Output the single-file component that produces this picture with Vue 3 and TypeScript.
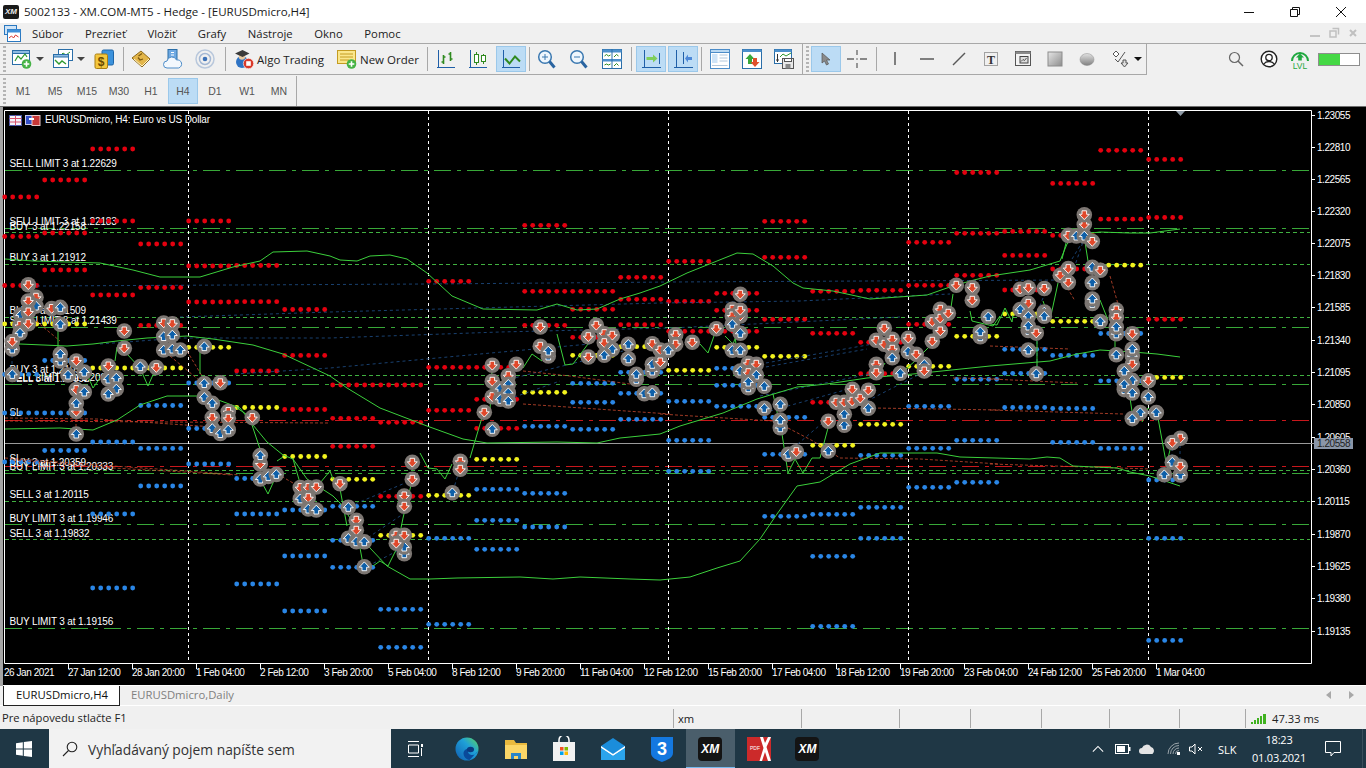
<script setup lang="ts">
type Row = [number, number, number?]
type Pt = [number, number]

const menus = ['Súbor', 'Prezrieť', 'Vložiť', 'Grafy', 'Nástroje', 'Okno', 'Pomoc']
const frames = ['M1', 'M5', 'M15', 'M30', 'H1', 'H4', 'D1', 'W1', 'MN']

const red: Row[] = [
  [92.7,148],[44.7,179],[4.7,196,5],[92.7,220],[188.7,220],[4.7,235.5,5],[44.7,232],[140.7,243],
  [188.7,265],[236.7,264.5],[44.7,269],[4.7,284.5,5],[140.7,286.5],[92.7,294],[188.7,301],[236.7,300.7],
  [284.7,308.5],[140.7,324.4],[284.7,354.4],[236.7,370],[332.7,384,12],[284.7,408.5],[332.7,417.3],[380.7,421.3],
  [332.7,445.3],[524.7,224.3],[428.7,280.3],[524.7,290.3,12],[620.7,276.3],[620.7,298.3],[572.7,308.3],
  [620.7,323.7],[524.7,324.3],[572.7,336.3],[428.7,366.3,12],[428.7,409.3],[476.7,398.3],[476.7,427.3],
  [380.7,495.3],[668.7,260.3],[764.7,220.3],[764.7,256.3],[812.7,290.3],[860.7,289.3],[908.7,241.3],[908.7,284.3],
  [956.7,232.3],[956.7,274.3],[668.7,300.3],[716.7,292.3],[716.7,309.3],[764.7,318.3],[668.7,330.3],[716.7,330.3],
  [812.7,332.3],[860.7,341.3],[908.7,323.3],[860.7,372.7],[812.7,401.3],[1100.7,149.3],[1148.7,158.4,5],
  [1052.7,182.4],[1100.7,218.2],[1148.7,216.5,5],[1004.7,230.4],[1052.7,234.4],[1004.7,254.4],[1052.7,268],
  [1004.7,289],[1148.7,318.3,5],[956.7,171.5,6]
]
const yellow: Row[] = [
  [4.7,323,11],[92.7,367,12],[188.7,346.3],[236.7,406.5],[284.7,455.5],[332.7,478.3],[428.7,494.3],[476.7,458.3],
  [380.7,534.3],[524.7,391.3],[572.7,354.3],[620.7,345.7],[668.7,369.3],[716.7,346.3],[764.7,355.3],[812.7,444.3],
  [860.7,423.3],[908.7,365.3],[956.7,335.3],[1052.7,320.3],[1004.7,313],[1100.7,264.2],[1148.7,376.4,5]
]
const blue: Row[] = [
  [44.7,359.5],[4.7,373.4,5],[188.7,382],[140.7,404.5],[4.7,412,11],[188.7,427.5],[92.7,441],[44.7,449.5],[140.7,447.4],
  [4.7,461,5],[188.7,463],[236.7,477.5],[140.7,485],[284.7,509],[332.7,505.3],[92.7,513],[236.7,513],[332.7,539.3],
  [284.7,555],[332.7,566.3],[236.7,583],[92.7,587],[284.7,610],[428.7,537.3],[476.7,488.3],[476.7,519.3],[476.7,548.3],
  [524.7,492.3],[524.7,526],[524.7,425.3],[572.7,382.3],[572.7,401.3],[572.7,428.3],[620.7,371.3],[620.7,392.3],
  [620.7,418.3],[380.7,608.3],[380.7,646.3],[428.7,623.3],[668.7,400.3],[668.7,439.3],[668.7,470.3],[716.7,367.3],
  [716.7,384.3],[716.7,405.3],[764.7,416.3],[764.7,453.3],[764.7,515.3],[812.7,513.3],[812.7,555.3],[812.7,625.3],
  [860.7,454.3],[860.7,506.3],[860.7,537.3],[908.7,405.3],[908.7,447.3],[908.7,486.3],[956.7,378.3],[956.7,439.3],
  [956.7,481.3],[1100.7,332.5],[1004.7,348.3],[1052.7,354.4],[1004.7,372.3],[1100.7,379.8],[1004.7,406.5],[1052.7,407.5],
  [1052.7,441.3],[1100.7,447.4],[1148.7,479,5],[1148.7,537.3,5],[1148.7,639.4,5]
]
const dots = (rows: Row[]) =>
  rows.flatMap(([x, y, n]) => Array.from({ length: n ?? 6 }, (_, i) => [x + i * 8, y] as Pt))
const dotGroups = [
  { c: '#e4000f', pts: dots(red) },
  { c: '#f2f21e', pts: dots(yellow) },
  { c: '#2a86e6', pts: dots(blue) }
]

const hLines = [
  { y: 169.5, k: 'long' }, { y: 227.5, k: 'long' }, { y: 231.5, k: 'short' }, { y: 263.5, k: 'short' },
  { y: 316.5, k: 'short' }, { y: 326.5, k: 'long' }, { y: 374.5, k: 'short' }, { y: 383.5, k: 'long' },
  { y: 469.5, k: 'short' }, { y: 472.5, k: 'long' }, { y: 500.5, k: 'short' }, { y: 523.5, k: 'long' },
  { y: 538.5, k: 'short' }, { y: 627.5, k: 'long' }, { y: 419.5, k: 'red' }, { y: 465.5, k: 'red' }
]
const separators = [188.5, 428.5, 668.5, 908.5, 1148.5]

const labels: [string, number][] = [
  ['SELL LIMIT 3 at 1.22629', 165.5], ['SELL LIMIT 3 at 1.22183', 223.5], ['BUY 3 at 1.22158', 228.5],
  ['BUY 3 at 1.21912', 259.5], ['BUY 3 at 1.21509', 312.5], ['SELL LIMIT 3 at 1.21439', 322.5],
  ['BUY 3 at 1.21052', 371.5], ['SELL LIMIT 3 at 1.20994', 379.5], ['SELL 3 at 1.20992', 381],
  ['SL', 414.5], ['SL', 461], ['BUY 3 at 1.20359', 465], ['BUY LIMIT 3 at 1.20333', 468.5],
  ['SELL 3 at 1.20115', 496.5], ['BUY LIMIT 3 at 1.19946', 520.5], ['SELL 3 at 1.19832', 535.5],
  ['BUY LIMIT 3 at 1.19156', 623.5]
]
const priceAxis: [string, number][] = [
  ['1.23055', 114], ['1.22810', 146], ['1.22565', 178], ['1.22320', 210], ['1.22075', 242], ['1.21830', 274],
  ['1.21585', 306], ['1.21340', 339], ['1.21095', 371], ['1.20850', 403], ['1.20605', 436], ['1.20360', 468],
  ['1.20115', 500], ['1.19870', 533], ['1.19625', 565], ['1.19380', 597], ['1.19135', 630]
]
const timeAxis = ['26 Jan 2021', '27 Jan 12:00', '28 Jan 20:00', '1 Feb 04:00', '2 Feb 12:00', '3 Feb 20:00', '5 Feb 04:00',
  '8 Feb 12:00', '9 Feb 20:00', '11 Feb 04:00', '12 Feb 12:00', '15 Feb 20:00', '17 Feb 04:00', '18 Feb 12:00',
  '19 Feb 20:00', '23 Feb 04:00', '24 Feb 12:00', '25 Feb 20:00', '1 Mar 04:00']

const toPts = (a: Pt[]) => a.map(p => p.join(',')).join(' ')

const bands: Pt[][] = [
  [[5,258],[33,260],[100,262],[133,269],[160,276],[200,276],[233,266],[260,260],[273,251],[307,250],[330,255],[340,259],[357,260],[370,255],[390,254],[407,258],[427,272],[452,295],[483,308],[537,309],[557,303],[577,309],[597,308],[620,298],[640,292],[660,285],[687,272],[717,260],[737,252],[753,253],[773,265],[793,282],[803,287],[833,290],[870,298],[927,294],[947,287],[970,280],[990,275],[1030,269],[1060,260],[1067,243],[1076,234],[1100,231],[1130,232],[1150,232],[1180,228]],
  [[5,346],[20,343],[67,345],[93,343],[117,340],[147,337],[187,335],[213,338],[253,344],[283,353],[313,367],[330,375],[347,387],[380,407],[427,425],[463,438],[487,442],[557,441],[597,442],[620,437],[650,434],[660,433],[680,425],[723,412],[757,398],[797,386],[827,383],[867,377],[913,373],[990,365],[1050,360],[1077,353],[1100,349],[1133,351],[1157,353],[1180,356]],
  [[5,428],[60,427],[93,429],[117,419],[140,404],[167,395],[197,395],[213,397],[240,407],[253,424],[267,441],[283,454],[293,458],[307,478],[333,495],[340,502],[370,547],[387,565],[410,578],[430,578],[457,577],[520,576],[553,578],[580,576],[630,578],[660,579],[690,576],[717,567],[740,560],[760,538],[777,513],[797,485],[820,481],[850,463],[880,452],[937,452],[960,456],[1030,458],[1047,456],[1060,457],[1073,465],[1117,467],[1130,471],[1150,475],[1180,485]]
]
const price: Pt[][] = [
  [[58,329],[58,346]], [[117,346],[115,360]], [[127,353],[140,367],[148,385],[156,367]], [[87,373],[93,387],[100,377]],
  [[200,346],[200,373]], [[237,407],[252,417]], [[252,424],[260,448]], [[260,478],[268,493],[277,473]], [[277,460],[283,456]],
  [[293,458],[300,482]], [[320,482],[330,470],[333,478]], [[340,488],[347,525]], [[360,547],[363,563]],
  [[373,565],[380,560],[388,565],[397,547],[403,517],[412,480]], [[420,452],[428,467],[437,468],[445,478],[452,463]],
  [[470,457],[483,413]], [[490,410],[492,368]], [[523,367],[532,353],[542,360]], [[557,333],[565,364],[573,363],[588,343]],
  [[700,343],[708,352],[715,332]], [[725,335],[733,343],[738,330]], [[737,355],[735,333]], [[773,393],[782,433],[788,472],[795,458],[803,472],[812,457],[820,457],[828,427]],
  [[840,413],[848,390]], [[875,378],[885,362]], [[898,375],[915,360],[930,345],[936,322]], [[953,293],[950,313]], [[970,310],[972,320],[993,325],[1000,315]],
  [[990,323],[997,324],[1005,307],[1012,321],[1013,314]], [[1037,340],[1037,370]], [[1043,300],[1050,319]], [[1058,282],[1050,319]],
  [[1062,258],[1066,242]], [[1085,241],[1088,260]], [[1100,299],[1108,319]], [[1115,336],[1115,346]], [[1130,397],[1133,417]],
  [[1142,421],[1148,407],[1158,417],[1166,461]], [[1172,441],[1166,465]]
]
const blueDash: Pt[][] = [
  [[37,285],[430,283],[670,281],[1067,279]], [[180,316],[330,311],[660,302],[800,300],[950,293]],
  [[100,343],[180,337],[330,337],[500,331],[670,327],[900,316]], [[235,373],[330,367],[480,353],[590,343]],
  [[510,378],[623,350]], [[760,367],[867,348]], [[760,363],[873,343]], [[760,395],[875,372]], [[770,410],[870,382]],
  [[793,447],[833,413]], [[867,400],[920,373]], [[350,505],[410,480]], [[363,540],[403,513]], [[368,565],[403,547]],
  [[453,490],[460,467]], [[503,400],[560,380]], [[1037,367],[1037,332]], [[1043,297],[1030,329]], [[1070,279],[1085,235]],
  [[1072,258],[1083,240]], [[1180,444],[1180,471]], [[1172,441],[1172,461]], [[12,348],[12,373]], [[20,332],[28,300]]
]
const redDash: Pt[][] = [
  [[5,417],[97,418],[200,425],[230,427]], [[5,420],[330,422]], [[5,457],[113,465],[187,470],[240,474]],
  [[13,459],[113,467],[200,472],[233,474]], [[523,370],[570,375],[630,383]], [[523,403],[670,413]], [[660,413],[773,420]],
  [[788,427],[813,440],[840,457],[920,458],[1000,463]], [[873,407],[1000,409]], [[953,377],[1000,378]],
  [[990,345],[1070,348]], [[990,378],[1077,382]], [[990,409],[1123,413]], [[990,463],[1150,468]],
  [[170,355],[200,380]], [[187,350],[205,380]], [[36,320],[60,340]], [[76,388],[76,433]], [[212,405],[212,428]],
  [[1060,274],[1075,300]], [[1110,275],[1120,310]], [[1132,335],[1132,392]], [[260,463],[300,486]]
]

const markers: [number, number, 'u' | 'd'][] = [
  [28.3,283.8,'d'],[36,296.3,'d'],[36,305,'u'],[28.3,300,'d'],[20.7,314,'u'],[28.3,311,'d'],[51.7,307.5,'d'],[60.3,306.4,'u'],[60.3,323.3,'u'],
  [20,324.4,'d'],[28.3,322.7,'d'],[20,332,'u'],[12.3,348,'u'],[12.3,340.6,'d'],[12.3,373.4,'u'],[60.3,360,'u'],[60.3,353,'u'],[76.3,360,'d'],
  [68,374,'u'],[84.3,371,'u'],[76.3,388.6,'d'],[84.3,391,'u'],[76.3,410.5,'d'],[76.3,402.4,'u'],[76.3,433,'u'],[124.3,330,'d'],[124.3,347.3,'d'],
  [140.3,365.6,'u'],[156.3,366.6,'d'],[108.3,365,'d'],[108.3,378,'u'],[116.3,377,'u'],[116.3,388,'u'],[108.3,393,'u'],[163.7,322,'d'],[172.3,322.7,'d'],
  [163.7,335.5,'u'],[172.3,334,'u'],[163.7,349,'u'],[172.3,348,'u'],[180.3,349,'u'],[204.3,345.6,'u'],[204.3,382.5,'u'],[220.3,381.8,'d'],[204.3,396.3,'u'],
  [212.3,402.4,'u'],[212.3,416.6,'d'],[228.3,410.5,'d'],[228.3,417.3,'d'],[212.3,427.5,'u'],[220.3,432.5,'u'],[228.3,428.8,'u'],[252.3,416.6,'d'],[260.3,463,'d'],
  [260.3,454.5,'u'],[260.3,478,'u'],[268.3,475.4,'u'],[276.3,473.4,'u'],[300.3,486.6,'d'],[308.3,486.6,'d'],[316.3,486,'d'],[300.3,497.8,'u'],[308.3,496.7,'d'],
  [308.3,508,'u'],[316.3,509,'u'],[340,482.7,'d'],[348.3,506.3,'u'],[356.3,519.3,'d'],[356.3,529.3,'d'],[348.3,537.3,'u'],[356.3,540.7,'u'],[364.3,540.7,'u'],
  [364.3,565.7,'u'],[412.3,461.3,'d'],[412.3,478.3,'d'],[404.3,495,'d'],[404.3,505.3,'d'],[396.3,534.3,'d'],[404.3,552.7,'u'],[404.3,546,'u'],[404.3,534.3,'d'],[396.3,542.3,'d'],
  [452.3,491.7,'u'],[460.3,460.3,'d'],[460.3,468.3,'d'],[484.3,411.3,'d'],[492.3,428.3,'u'],[492.3,364.3,'d'],[492.3,380.3,'d'],[492.3,395.7,'d'],[500.3,387.7,'u'],
  [500.3,398.3,'u'],[508.3,374.7,'d'],[508.3,383.3,'u'],[508.3,391.7,'u'],[508.3,400,'u'],[516.3,363.3,'d'],[540.3,326,'d'],[540.3,345.3,'d'],[548.3,355,'u'],[548.3,350,'u'],
  [588.3,335.7,'d'],[596.3,324.3,'d'],[588.3,356,'d'],[604.3,332.7,'d'],[612.3,334.3,'d'],[604.3,341.7,'d'],[612.3,348.3,'u'],[604.3,354.3,'u'],[628.3,343.3,'u'],
  [628.3,357.7,'u'],[636.3,378.3,'u'],[636.3,373.3,'u'],[644.3,392.7,'u'],[652.3,391.7,'u'],[652.3,342.7,'d'],[660.3,349,'d'],[652.3,370,'u'],[652.3,363.3,'u'],[660.3,361,'d'],
  [675.7,333.7,'d'],[675.7,343.3,'d'],[668.3,349.3,'u'],[692.3,341.3,'d'],[716.3,327.7,'d'],[740.3,293.3,'d'],[732.3,308.3,'d'],[740.3,315,'d'],[732.3,315,'d'],[740.3,309.3,'d'],
  [732.3,323.3,'u'],[740.3,332.3,'u'],[732.3,349.3,'u'],[740.3,349.3,'u'],[748.3,362.3,'d'],[756.3,363.3,'d'],[740.3,370,'u'],[748.3,371.7,'d'],[756.3,374,'u'],[748.3,386.7,'u'],
  [748.3,381,'u'],[764.3,385.3,'u'],[764.3,407.3,'u'],[780.3,403.3,'u'],[780.3,426.7,'u'],[780.3,419,'u'],[788.3,453.3,'u'],[796.3,450.7,'d'],[828.3,420.3,'d'],[828.3,450,'u'],
  [844.3,424.3,'u'],[844.3,413.3,'u'],[836.3,401.3,'d'],[844.3,401.3,'d'],[852.3,388.3,'d'],[852.3,400.3,'d'],[860.3,397.3,'d'],[868.3,389.3,'d'],[868.3,407.3,'u'],
  [876.3,339.3,'d'],[876.3,363.3,'d'],[876.3,371.7,'d'],[884.3,327.3,'d'],[884.3,343.3,'d'],[892.3,338.3,'d'],[892.3,348.3,'d'],[892.3,356.7,'u'],[900.3,372.3,'u'],[908.3,337.3,'d'],
  [908.3,350.7,'u'],[916.3,353.3,'d'],[924.3,363.3,'u'],[924.3,370,'d'],[932.3,340.3,'d'],[932.3,320.7,'d'],[940.3,308.3,'d'],[940.3,317.3,'d'],[940.3,330,'d'],[948.3,312.3,'d'],
  [956.3,284.3,'d'],[972.3,286.7,'d'],[972.3,299.3,'d'],[988.3,315.7,'u'],[980.3,335.7,'u'],[980.3,330.7,'u'],[1020.3,288.2,'d'],[1028.3,286.8,'d'],[1044.3,287.5,'d'],[1028.3,302.4,'d'],
  [1020.3,308.5,'u'],[1028.3,315.2,'u'],[1044.3,311,'u'],[1044.3,315.2,'u'],[1028.3,329.4,'u'],[1028.3,325,'u'],[1036.3,332.1,'d'],[1028.3,349,'u'],[1036.3,372.7,'u'],[1060.3,274.3,'d'],
  [1068.3,267.6,'d'],[1068.3,281.4,'d'],[1068.3,234.4,'d'],[1076.3,235,'u'],[1084.3,223.6,'d'],[1084.3,213.8,'d'],[1084.3,235,'u'],[1092.3,240.5,'d'],[1092.3,266.2,'u'],[1100.3,269.3,'d'],
  [1092.3,281.8,'u'],[1092.3,302.4,'u'],[1092.3,298,'u'],[1100.3,320.6,'u'],[1116.3,309,'d'],[1116.3,316.6,'d'],[1116.3,332.8,'u'],[1116.3,326,'u'],[1116.3,353.8,'u'],[1132.3,332.8,'d'],
  [1132.3,354.8,'u'],[1132.3,348,'u'],[1132.3,363.2,'d'],[1124.3,370,'u'],[1132.3,379.4,'u'],[1124.3,388.6,'u'],[1124.3,383.5,'u'],[1132.3,392,'u'],[1148.3,379.8,'d'],[1148.3,396,'u'],
  [1156.3,411.6,'u'],[1140.3,411.6,'u'],[1132.3,417.6,'u'],[1180.3,437.2,'d'],[1172.3,441.6,'d'],[1172.3,461.2,'u'],[1180.3,474,'u'],[1180.3,465.3,'d'],[1164.3,473.7,'u']
]
</script>

<template>
  <div class="app">
    <header class="titlebar">
      <span class="xm-mini">XM</span>
      <span class="title-text">5002133 - XM.COM-MT5 - Hedge - [EURUSDmicro,H4]</span>
      <span class="win-ctrls">
        <svg width="14" height="14" viewBox="0 0 14 14"><path d="M2 7.5h10" stroke="#111" /></svg>
        <svg class="wc2" width="14" height="14" viewBox="0 0 14 14"><path d="M2.5 4.5h7v7h-7zM4.5 4.5v-2h7v7h-2" fill="none" stroke="#111" /></svg>
        <svg class="wc3" width="14" height="14" viewBox="0 0 14 14"><path d="M2 2l10 10M12 2L2 12" stroke="#111" /></svg>
      </span>
    </header>

    <nav class="menubar">
      <svg class="app-ico" width="17" height="17" viewBox="0 0 17 17">
        <rect x="0.5" y="0.5" width="12" height="9" fill="#cfe4f7" stroke="#2a78c0" />
        <rect x="3.5" y="4.5" width="13" height="12" fill="#fff" stroke="#2a78c0" />
        <rect x="3.5" y="4.5" width="13" height="3" fill="#3d8fd8" />
        <path d="M5 13l2.500-2 2 2 2-3 3 2" fill="none" stroke="#d9342b" />
      </svg>
      <span v-for="m in menus" :key="m" class="menu-item">{{ m }}</span>
      <span class="mdi-ctrls">
        <svg width="12" height="12" viewBox="0 0 12 12"><rect x="1" y="8" width="10" height="2" fill="#c4c4c4" /></svg>
        <svg width="12" height="12" viewBox="0 0 12 12"><path d="M2 4h6v6H2zM4.500 1.500h6v6" fill="none" stroke="#c0c0c0" stroke-width="1.500" /></svg>
        <svg width="12" height="12" viewBox="0 0 12 12"><path d="M3 3l6 6M9 3l-6 6" stroke="#c0c0c0" stroke-width="2" /></svg>
      </span>
    </nav>

    <div class="toolbar">
      <div class="tb-left">
        <i class="grip ml3"></i>
        <svg class="ic ml6" viewBox="0 0 20 20">
          <rect x="0.5" y="1.500" width="17" height="14" fill="#fff" stroke="#2a6ea8" />
          <rect x="0.5" y="1.500" width="17" height="3" fill="#8dbbe2" stroke="#2a6ea8" />
          <path d="M3 12l3-5 3 3 4-5 2 3" fill="none" stroke="#2f9a2f" stroke-width="1.200" />
          <circle cx="14.500" cy="15" r="4.800" fill="#46b346" />
          <path d="M14.500 12.200v5.600M11.700 15h5.600" stroke="#fff" stroke-width="1.600" />
        </svg>
        <i class="caret ml4"></i>
        <svg class="ic ml9" viewBox="0 0 20 20">
          <rect x="5.500" y="0.500" width="14" height="11" fill="#fff" stroke="#2a6ea8" />
          <path d="M7 7l3-3 3 2 4-3" fill="none" stroke="#2f9a2f" />
          <rect x="0.500" y="5.500" width="15" height="13" fill="#fff" stroke="#2a6ea8" />
          <rect x="0.500" y="5.500" width="15" height="2.500" fill="#8dbbe2" stroke="#2a6ea8" />
          <path d="M2 11l4 4 3-3 4 3" fill="none" stroke="#2f9a2f" stroke-width="1.400" />
        </svg>
        <i class="caret ml4"></i>
        <svg class="ic ml9" viewBox="0 0 20 20">
          <rect x="8" y="1" width="11.500" height="15" rx="1.500" fill="#3c92dc" stroke="#1e66a8" />
          <rect x="1" y="5" width="12.500" height="14.500" rx="1.500" fill="#f4c73e" stroke="#a97f14" />
          <text x="7.200" y="16.500" class="dollar">$</text>
        </svg>
        <i class="sep ml9"></i>
        <svg class="ic ml7" viewBox="0 0 20 20">
          <path d="M1 9l9-7 9 8-8 8z" fill="#e3b64a" stroke="#8e6a1a" />
          <path d="M3 10l8 7 7-7" fill="none" stroke="#fff2c4" />
          <path d="M7.500 7l3.500-2.500M7 8.500l2 2.500 3-1" fill="none" stroke="#7d5a10" stroke-width="1.300" />
        </svg>
        <svg class="ic ml12" viewBox="0 0 20 20">
          <rect x="5" y="0.500" width="9" height="11" fill="#6fa9e2" stroke="#2a6ea8" />
          <path d="M8 3.500h3M8 6h3" stroke="#fff" />
          <path d="M4 19a3.500 3.500 0 0 1 0-7 5 5 0 0 1 9.500-1 4 4 0 0 1 2 8z" fill="#f3f8fd" stroke="#4d8cc8" />
        </svg>
        <svg class="ic ml12" viewBox="0 0 20 20">
          <circle cx="10" cy="10" r="9" fill="none" stroke="#b9c8dc" stroke-width="1.500" />
          <circle cx="10" cy="10" r="5.500" fill="none" stroke="#a4b8d4" stroke-width="1.500" />
          <circle cx="10" cy="10" r="2.300" fill="#3d72b8" />
        </svg>
        <i class="sep ml10"></i>
        <svg class="ic ml8" viewBox="0 0 20 20">
          <circle cx="8" cy="13" r="6" fill="#2f73c4" />
          <circle cx="8" cy="7.500" r="3.200" fill="#e8c9a0" />
          <path d="M1 4.500L8.500 1l7 3.500-7 3.500z" fill="#3a3a3a" />
          <circle cx="14.500" cy="14.500" r="5.200" fill="#d9392a" stroke="#fff" stroke-width="0.600" />
          <rect x="12.200" y="12.200" width="4.600" height="4.600" fill="#fff" />
        </svg>
        <span class="tb-text t-algo">Algo Trading</span>
        <svg class="ic ml13" viewBox="0 0 20 20">
          <rect x="0.500" y="1.500" width="18" height="13" fill="#fbe78c" stroke="#c49c22" />
          <path d="M3 5h13M3 8h13M3 11h9" stroke="#c49c22" />
          <circle cx="14.500" cy="15" r="4.800" fill="#46b346" />
          <path d="M14.500 12.200v5.600M11.700 15h5.600" stroke="#fff" stroke-width="1.600" />
        </svg>
        <span class="tb-text t-order">New Order</span>
        <i class="sep ml9"></i>
        <svg class="ic ml8" viewBox="0 0 20 20">
          <path d="M2.500 1v17M1 18.500h18" stroke="#1f5fa8" fill="none" />
          <path d="M7.500 6v9M5.500 13h2M7.500 8h2M14.500 3v9M12.500 5h2M14.500 10h2" stroke="#2f8a1f" stroke-width="1.600" fill="none" />
        </svg>
        <svg class="ic ml12" viewBox="0 0 20 20">
          <path d="M2.500 1v17M1 18.500h18" stroke="#1f5fa8" fill="none" />
          <path d="M8.500 3v13M15.500 5v10" stroke="#2f8a1f" />
          <rect x="6.500" y="5.500" width="4" height="8" fill="#fff" stroke="#2f8a1f" />
          <rect x="13.500" y="6.500" width="4" height="6" fill="#fff" stroke="#2f8a1f" />
        </svg>
        <div class="act ml8">
          <svg class="ic" viewBox="0 0 20 20">
            <path d="M2.500 1v17M1 18.500h18" stroke="#1f5fa8" fill="none" />
            <path d="M4 9.500l4.500 5 5.500-7 5 5" fill="none" stroke="#2f8a1f" stroke-width="2" />
          </svg>
        </div>
        <i class="sep ml3"></i>
        <svg class="ic ml7" viewBox="0 0 20 20">
          <circle cx="8" cy="8" r="6.300" fill="#eef6fd" stroke="#3a78b0" stroke-width="1.500" />
          <path d="M8 5v6M5 8h6" stroke="#3a78b0" />
          <path d="M12.500 12.500L17.500 18.500" stroke="#2a64a0" stroke-width="3" />
        </svg>
        <svg class="ic ml12" viewBox="0 0 20 20">
          <circle cx="8" cy="8" r="6.300" fill="#eef6fd" stroke="#3a78b0" stroke-width="1.500" />
          <path d="M5 8h6" stroke="#3a78b0" />
          <path d="M12.500 12.500L17.500 18.500" stroke="#2a64a0" stroke-width="3" />
        </svg>
        <svg class="ic ml13" viewBox="0 0 20 20">
          <rect x="0.500" y="0.500" width="19" height="19" fill="#fff" stroke="#2a6ea8" />
          <rect x="0.500" y="0.500" width="19" height="3" fill="#4c90cc" />
          <rect x="0.500" y="10" width="19" height="2.500" fill="#4c90cc" />
          <path d="M10 0v20" stroke="#2a6ea8" />
          <path d="M2.500 7l2-1.500 2 1.500 2-1M12 8l2.500-2.500 2 1.500M2.500 16l2-1 2 1 2-1M12 17l2.500-2.500 2 2" fill="none" stroke="#2f8a1f" />
        </svg>
        <i class="sep ml9"></i>
        <div class="act ml4">
          <svg class="ic" viewBox="0 0 20 20">
            <path d="M3.500 1v17M1 18.500h19M18.500 4v11" stroke="#1f5fa8" fill="none" />
            <path d="M5.500 8h6.500V5.500L16.500 9.500 12 13.500V11H5.500z" fill="#7fcf5a" />
          </svg>
        </div>
        <div class="act ml2">
          <svg class="ic" viewBox="0 0 20 20">
            <path d="M3.500 1v17M1 18.500h19M10.500 3v12" stroke="#1f5fa8" fill="none" />
            <path d="M19 8h-4V5.500L12 9.500l3 4V11h4z" fill="#4c88d8" />
          </svg>
        </div>
        <i class="sep ml3"></i>
        <svg class="ic ml8" viewBox="0 0 20 20">
          <rect x="0.500" y="0.500" width="19" height="19" fill="#fff" stroke="#4c8cc8" />
          <rect x="0.500" y="0.500" width="19" height="3" fill="#b9d8f2" stroke="#4c8cc8" />
          <rect x="2" y="5" width="5.500" height="9" fill="#cfe4f7" />
          <path d="M9.500 6h8M9.500 9h8M9.500 12h8M2 16.500h15.500" stroke="#b4c8dc" />
        </svg>
        <svg class="ic ml12" viewBox="0 0 20 20">
          <rect x="0.500" y="0.500" width="19" height="19" fill="#fff" stroke="#2a6ea8" />
          <rect x="0.500" y="0.500" width="19" height="2.500" fill="#4c90cc" />
          <path d="M8 5L3.500 10H6v5h4v-5h2.500z" fill="#3aa83a" />
          <path d="M13 18l4.500-5H15V9h-4v4H8.500z" fill="#e0502c" />
        </svg>
        <svg class="ic ml12" viewBox="0 0 20 20">
          <rect x="0.500" y="0.500" width="17" height="14" fill="#fff" stroke="#2a6ea8" />
          <rect x="0.500" y="0.500" width="17" height="2.500" fill="#4c90cc" />
          <path d="M3.500 5v8M2 11h3" stroke="#333" />
          <path d="M6 8l3-3 3 2 5-3" fill="none" stroke="#2f9a2f" />
          <rect x="8.500" y="9.500" width="11" height="10" fill="#e9e9e9" stroke="#555" />
          <rect x="10.500" y="9.500" width="7" height="3" fill="#fff" stroke="#555" />
          <rect x="11.500" y="15" width="5" height="4.500" fill="#888" />
        </svg>
        <i class="sep-full ml8"></i>
        <i class="grip ml3"></i>
        <div class="act ml2">
          <svg width="12" height="14" viewBox="0 0 12 14"><path d="M2 1v10l2.500-2 2 4 2-1-2-4h3.500z" fill="#8a8a8a" stroke="#555" stroke-width="0.700" /></svg>
        </div>
        <svg class="ic ml6" viewBox="0 0 20 20">
          <path d="M10 1v5M10 14v5M0 10h7M13 10h7" stroke="#666" stroke-width="1.300" />
          <path d="M10 9v2" stroke="#666" />
        </svg>
        <i class="sep ml9"></i>
        <svg class="ic ml8" viewBox="0 0 20 20"><path d="M10 3v13" stroke="#5a5a5a" stroke-width="1.500" /></svg>
        <svg class="ic ml12" viewBox="0 0 20 20"><path d="M3 10h14" stroke="#5a5a5a" stroke-width="1.500" /></svg>
        <svg class="ic ml12" viewBox="0 0 20 20"><path d="M4 16L16 4" stroke="#5a5a5a" stroke-width="1.500" /></svg>
        <svg class="ic ml12" viewBox="0 0 20 20">
          <rect x="3.500" y="3.500" width="13" height="13" fill="none" stroke="#555" stroke-dasharray="1 1" />
          <text x="10" y="15" class="tool-t">T</text>
        </svg>
        <svg class="ic ml12" viewBox="0 0 20 20">
          <rect x="2.500" y="2.500" width="15" height="14" fill="#f4f4f4" stroke="#555" />
          <rect x="2.500" y="2.500" width="15" height="2.500" fill="#8a8a8a" />
          <rect x="7" y="7.500" width="8" height="6.500" fill="#ddd" stroke="#444" />
          <path d="M8 12.500l2-2 1.500 1 2-2.500" fill="none" stroke="#333" stroke-width="0.800" />
        </svg>
        <svg class="ic ml12" viewBox="0 0 20 20">
          <defs><linearGradient id="rg" x1="0" y1="0" x2="1" y2="1"><stop offset="0" stop-color="#e6e6e6" /><stop offset="1" stop-color="#8d8d8d" /></linearGradient></defs>
          <rect x="3" y="3" width="14" height="14" fill="url(#rg)" stroke="#8c8c8c" />
        </svg>
        <svg class="ic ml12" viewBox="0 0 20 20">
          <defs><linearGradient id="eg" x1="0" y1="0" x2="0" y2="1"><stop offset="0" stop-color="#e2e2e2" /><stop offset="1" stop-color="#808080" /></linearGradient></defs>
          <ellipse cx="10" cy="10.500" rx="7" ry="6" fill="url(#eg)" stroke="#8c8c8c" stroke-width="0.500" />
        </svg>
        <svg class="ic ml12" viewBox="0 0 20 20">
          <path d="M7 2l3 3-3 3-3-3z" fill="#fff" stroke="#555" />
          <path d="M6 10l3 3 7-10" fill="none" stroke="#555" />
          <path d="M14 11h3v3h2l-3.500 4L12 14h2z" fill="#ddd" stroke="#555" />
        </svg>
        <i class="caret dark ml5"></i>
      </div>
      <div class="tb-right">
        <svg class="ir ml81" width="16" height="16" viewBox="0 0 16 16">
          <circle cx="6.500" cy="6.500" r="5" fill="none" stroke="#666" stroke-width="1.200" />
          <path d="M10 10l5 5" stroke="#666" stroke-width="1.500" />
        </svg>
        <svg class="ir ml16" width="18" height="18" viewBox="0 0 18 18">
          <circle cx="9" cy="9" r="7.800" fill="#fff" stroke="#222" stroke-width="1.400" />
          <circle cx="9" cy="7.500" r="3.200" fill="none" stroke="#222" stroke-width="1.300" />
          <path d="M3.800 14a6 5 0 0 1 10.400 0" fill="none" stroke="#222" stroke-width="1.300" />
        </svg>
        <svg class="ir ml11" width="22" height="22" viewBox="0 0 22 22">
          <path d="M3 13a8 8 0 0 1 16 0" fill="none" stroke="#1fa83f" stroke-width="2" />
          <path d="M11 5.500l4 4h-2.200v3h-3.600v-3H7z" fill="#1fa83f" />
          <text x="11" y="21" class="lvl">LVL</text>
        </svg>
        <div class="lvl-bar ml7"><span class="lvl-fill"></span></div>
      </div>
    </div>

    <div class="frames">
      <i class="grip tall ml3"></i>
      <div class="frame-list">
        <span v-for="f in frames" :key="f" class="frame" :class="{ on: f === 'H4' }">{{ f }}</span>
      </div>
    </div>

    <main class="chart-wrap">
      <svg class="chart" width="1366" height="580" viewBox="0 105 1366 580">
        <rect x="0" y="105" width="1366" height="580" fill="#000" />
        <rect x="0" y="105" width="3" height="580" fill="#a4a4a4" />
        <path d="M0 105.500H1366" stroke="#6e6e6e" />
        <path d="M3 684.500H1366" stroke="#fff" />
        <path d="M4.500 109.500H1311.500V662.500H4.500Z" fill="none" stroke="#fff" />

        <line v-for="l in hLines" :key="l.y + l.k" x1="5" :y1="l.y" x2="1310" :y2="l.y" :class="'h-' + l.k" />
        <line x1="5" y1="442.500" x2="1311" y2="442.500" stroke="#9a9a9a" />
        <line v-for="s in separators" :key="s" :x1="s" y1="110" :x2="s" y2="662" class="period" />

        <text v-for="t in labels" :key="t[0] + t[1]" x="9.500" :y="t[1]" class="lbl">{{ t[0] }}</text>

        <g v-for="g in dotGroups" :key="g.c" :fill="g.c">
          <circle v-for="(p, i) in g.pts" :key="i" :cx="p[0]" :cy="p[1]" r="2.400" />
        </g>

        <polyline v-for="(b, i) in blueDash" :key="'bd' + i" :points="toPts(b)" class="dash-blue" />
        <polyline v-for="(b, i) in redDash" :key="'rd' + i" :points="toPts(b)" class="dash-red" />
        <polyline v-for="(b, i) in bands" :key="'bb' + i" :points="toPts(b)" class="green" />
        <polyline v-for="(b, i) in price" :key="'pp' + i" :points="toPts(b)" class="green" />

        <g v-for="(m, i) in markers" :key="'m' + i" :transform="`translate(${m[0]} ${m[1]})`">
          <circle r="7.800" fill="#7c7672" />
          <polygon v-if="m[2] === 'u'" points="0,-4.800 5,0.500 2.300,0.500 2.300,4 -2.300,4 -2.300,0.500 -5,0.500" class="arrow-up" />
          <polygon v-else points="0,4.800 5,-0.500 2.300,-0.500 2.300,-4 -2.300,-4 -2.300,-0.500 -5,-0.500" class="arrow-down" />
        </g>

        <polygon points="1176,110 1185,110 1180.500,115" fill="#8f9aa6" />

        <g>
          <rect x="9.500" y="114.500" width="12" height="10" fill="#f4f4fa" stroke="#4a58a8" />
          <path d="M9.500 117.500h12M15.500 114.500v10M9.500 121h12" stroke="#d8506a" />
          <rect x="25.500" y="114.500" width="8" height="9" fill="#3450c8" stroke="#c8c8e8" />
          <rect x="32" y="114.500" width="8" height="10" fill="#c83838" stroke="#e8c8c8" />
          <rect x="29" y="117" width="5" height="2" fill="#fff" />
        </g>
        <text x="45" y="121.500" class="lbl">EURUSDmicro, H4:  Euro vs US Dollar</text>

        <g v-for="t in priceAxis" :key="t[0]">
          <line x1="1311" :y1="t[1] + 0.500" x2="1315" :y2="t[1] + 0.500" stroke="#fff" />
          <text x="1317" :y="t[1] + 3.500" class="lbl axis">{{ t[0] }}</text>
        </g>
        <line x1="1311" y1="442.500" x2="1314" y2="442.500" stroke="#9a9a9a" />
        <rect x="1314" y="437" width="39" height="11" fill="#8a96a8" />
        <text x="1317" y="446" class="lbl axis price-now">1.20558</text>

        <g v-for="(t, i) in timeAxis" :key="t">
          <line :x1="68.500 + (i - 1) * 64" y1="662" :x2="68.500 + (i - 1) * 64" y2="668" stroke="#fff" v-if="i > 0" />
          <text :x="4 + i * 64" y="675" class="lbl axis">{{ t }}</text>
        </g>
      </svg>
    </main>

    <div class="tabs">
      <span class="tab active">EURUSDmicro,H4</span>
      <span class="tab">EURUSDmicro,Daily</span>
      <span class="tab-arrows">
        <svg width="8" height="10" viewBox="0 0 8 10"><path d="M6 1v8L1 5z" fill="#a8a8a8" /></svg>
        <svg width="8" height="10" viewBox="0 0 8 10"><path d="M2 1v8l5-4z" fill="#a8a8a8" /></svg>
      </span>
    </div>

    <div class="statusbar">
      <span class="st-help">Pre nápovedu stlačte F1</span>
      <span class="st-cell c-xm">xm</span>
      <span class="st-cell c2"></span>
      <span class="st-cell c3"></span>
      <span class="st-cell c4"></span>
      <span class="st-cell c5"></span>
      <span class="st-cell c6"></span>
      <span class="st-cell c7"></span>
      <span class="st-cell c-ping">
        <svg width="16" height="12" viewBox="0 0 16 12">
          <g fill="#3fb21f">
            <rect x="0" y="9" width="2" height="2" /><rect x="3" y="7" width="2" height="4" />
            <rect x="6" y="5" width="2" height="6" /><rect x="9" y="3" width="2" height="8" />
            <rect x="12" y="1" width="3" height="10" />
          </g>
        </svg>
        47.33 ms
      </span>
    </div>

    <footer class="taskbar">
      <div class="tk-start">
        <svg width="16" height="16" viewBox="0 0 16 16">
          <path d="M0 2.200L6.800 1.200V7.500H0zM7.800 1L16 0V7.500H7.800zM0 8.500H6.800V14.800L0 13.800zM7.800 8.500H16V16L7.800 15z" fill="#fff" />
        </svg>
      </div>
      <div class="tk-search">
        <svg width="16" height="16" viewBox="0 0 16 16">
          <circle cx="10" cy="6" r="4.800" fill="none" stroke="#222" stroke-width="1.100" />
          <path d="M6.500 9.500L1 15" stroke="#222" stroke-width="1.100" />
        </svg>
        <span>Vyhľadávaný pojem napíšte sem</span>
      </div>
      <div class="tk-app w-task">
        <svg width="16" height="16" viewBox="0 0 16 16">
          <path d="M0 .5h11M0 15.500h11M.5 4h10v8H.5z" fill="none" stroke="#fff" />
          <rect x="13" y="3" width="2" height="3" fill="#fff" /><rect x="13" y="7" width="1" height="8" fill="#fff" />
        </svg>
      </div>
      <div class="tk-app">
        <svg width="24" height="24" viewBox="0 0 24 24">
          <defs><linearGradient id="edge" x1="0" y1="1" x2="1" y2="0"><stop offset="0" stop-color="#0f5cb0" /><stop offset="0.600" stop-color="#1fa0d8" /><stop offset="1" stop-color="#5fd85a" /></linearGradient></defs>
          <circle cx="12" cy="12" r="11.500" fill="url(#edge)" />
          <path d="M23 14c-1 3-5 5-8 3.500-2.500-1.200-2.500-4 0-5.500-3-1-6.500 1-6.500 4.500 0 3 2.500 6 6 6.500" fill="#0a4a9a" />
          <ellipse cx="15.500" cy="12.500" rx="3.500" ry="2.800" fill="#0a3a80" />
        </svg>
      </div>
      <div class="tk-app">
        <svg width="24" height="22" viewBox="0 0 24 22">
          <path d="M1 2h9l2 3h11v16H1z" fill="#e9b93e" />
          <rect x="1" y="7" width="22" height="14" fill="#fbd667" />
          <path d="M7 21v-6h10v6h-3v-3h-4v3z" fill="#2a86c8" />
        </svg>
      </div>
      <div class="tk-app">
        <svg width="24" height="26" viewBox="0 0 24 26">
          <path d="M7 6V4a5 5 0 0 1 10 0v2" fill="none" stroke="#fff" stroke-width="1.500" />
          <rect x="1" y="6" width="22" height="19" fill="#f1f1f1" />
          <rect x="8" y="11" width="3.500" height="3.500" fill="#f25022" /><rect x="12.500" y="11" width="3.500" height="3.500" fill="#7fba00" />
          <rect x="8" y="15.500" width="3.500" height="3.500" fill="#00a4ef" /><rect x="12.500" y="15.500" width="3.500" height="3.500" fill="#ffb900" />
        </svg>
      </div>
      <div class="tk-app">
        <svg width="24" height="22" viewBox="0 0 24 22">
          <path d="M12 0L24 8v14H0V8z" fill="#1b8ddb" />
          <path d="M0 8l12 8 12-8v2l-12 8-12-8z" fill="#fff" />
          <path d="M0 10v12h24V10l-12 8z" fill="#2ba4ec" />
        </svg>
      </div>
      <div class="tk-app">
        <svg width="22" height="25" viewBox="0 0 22 25">
          <path d="M0 0h22v16c0 5-6 7-11 9C6 23 0 21 0 16z" fill="#1478e0" />
          <text x="11" y="18" class="three">3</text>
        </svg>
      </div>
      <div class="tk-app on"><span class="xm-big">XM</span></div>
      <div class="tk-app">
        <svg width="24" height="24" viewBox="0 0 24 24">
          <rect width="24" height="24" fill="#cc2a2a" />
          <text x="8" y="13" class="pdf">PDF</text>
          <path d="M13 0h3l2 6 3-6h3l-4.500 10L24 24h-3l-3-9-3 9h-2.500l4-13z" fill="#fff" />
        </svg>
      </div>
      <div class="tk-app"><span class="xm-big">XM</span></div>
      <div class="tray">
        <svg class="t1" width="12" height="8" viewBox="0 0 14 8"><path d="M1 7l6-6 6 6" fill="none" stroke="#fff" stroke-width="1.200" /></svg>
        <svg class="t2" width="16" height="10" viewBox="0 0 16 10"><rect x=".5" y=".5" width="13" height="9" fill="none" stroke="#fff" /><rect x="2" y="2" width="8" height="6" fill="#fff" /><rect x="14" y="3" width="1.500" height="4" fill="#fff" /></svg>
        <svg class="t3" width="17" height="10" viewBox="0 0 17 10"><path d="M3 10a3 3 0 0 1 0-6 5 5 0 0 1 9-1 4 4 0 0 1 1.500 7z" fill="#e4e4e4" /></svg>
        <svg class="t4" width="14" height="14" viewBox="0 0 14 14">
          <path d="M1 12a11 11 0 0 1 11-11M3.500 12a8.500 8.500 0 0 1 8.500-8.500M6 12a6 6 0 0 1 6-6M8.500 12a3.500 3.500 0 0 1 3.500-3.500" fill="none" stroke="#9aa4aa" />
          <rect x="10" y="10" width="3" height="3" fill="#fff" />
        </svg>
        <svg class="t5" width="15" height="12" viewBox="0 0 15 12"><path d="M.5 4h2.500l3-3v10l-3-3H.5z" fill="none" stroke="#fff" /><path d="M9 4l4 4M13 4l-4 4" stroke="#fff" /></svg>
        <span class="t-lang">SLK</span>
        <span class="t-clock"><span>18:23</span><span>01.03.2021</span></span>
        <svg class="t-note" width="16" height="16" viewBox="0 0 16 16"><path d="M.5.500h15v11H9l-3 3.500v-3.500H.5z" fill="none" stroke="#fff" /></svg>
        <i class="t-end"></i>
      </div>
    </footer>
  </div>
</template>

<style scoped>
.app {
  width: 1366px;
  height: 768px;
  display: flex;
  flex-direction: column;
  overflow: hidden;
  background: #f0f0f0;
  font-family: "Open Sans", "Liberation Sans", sans-serif;
  color: #111;
}
.titlebar {
  height: 23px;
  background: #fff;
  display: flex;
  align-items: center;
  padding-left: 3px;
  flex: none;
}
.xm-mini {
  width: 16px;
  height: 14px;
  margin-right: 5px;
  background: #1a1a1a;
  border-radius: 2px;
  color: #eee;
  font: italic bold 8px/14px "Liberation Sans", sans-serif;
  text-align: center;
}
.title-text {
  font-size: 11.550px;
  color: #1a1a1a;
}
.win-ctrls {
  margin-left: auto;
  display: flex;
  align-items: center;
}
.wc2 { margin-left: 32px; }
.wc3 { margin-left: 32px; margin-right: 18px; }

.menubar {
  height: 20px;
  flex: none;
  display: flex;
  align-items: center;
  padding-left: 4px;
  font-family: "Open Sans", sans-serif;
  font-size: 11.300px;
  color: #222;
}
.app-ico { margin-right: 11px; }
.menu-item { margin-right: 21.600px; }
.mdi-ctrls {
  margin-left: auto;
  margin-right: 7px;
  display: flex;
  gap: 7px;
}

.toolbar {
  height: 32px;
  flex: none;
  display: flex;
  border-top: 1px solid #a8a8a8;
  box-sizing: content-box;
}
.tb-left {
  width: 1146px;
  height: 30px;
  display: flex;
  align-items: center;
  border-bottom: 1px solid #a8a8a8;
  border-right: 1px solid #a8a8a8;
}
.tb-right {
  flex: 1;
  height: 30px;
  display: flex;
  align-items: center;
}
.ic { width: 20px; height: 20px; flex: none; }
.ir { flex: none; }
.grip {
  width: 3px;
  height: 26px;
  flex: none;
  background: repeating-linear-gradient(to bottom, #b4b4b4 0 2px, transparent 2px 4px);
}
.grip.tall { height: 27px; }
.caret {
  width: 0;
  height: 0;
  flex: none;
  border-left: 4px solid transparent;
  border-right: 4px solid transparent;
  border-top: 4px solid #444;
}
.caret.dark { border-top-color: #111; }
.sep {
  width: 1px;
  height: 24px;
  flex: none;
  background: #a8a8a8;
}
.sep-full {
  width: 1px;
  height: 30px;
  flex: none;
  background: #a8a8a8;
}
.act {
  width: 30px;
  height: 26px;
  flex: none;
  box-sizing: border-box;
  background: #bcdcf5;
  border: 1px solid #9bc8ea;
  display: flex;
  align-items: center;
  justify-content: center;
}
.tb-text {
  font-size: 11.500px;
  color: #222;
  margin-left: 3px;
  white-space: nowrap;
  flex: none;
}
.t-algo { width: 67px; }
.t-order { width: 58px; }
.ml2 { margin-left: 2px; }
.ml3 { margin-left: 3px; }
.ml4 { margin-left: 4px; }
.ml5 { margin-left: 5px; }
.ml6 { margin-left: 6px; }
.ml7 { margin-left: 7px; }
.ml8 { margin-left: 8px; }
.ml9 { margin-left: 9px; }
.ml10 { margin-left: 10px; }
.ml11 { margin-left: 11px; }
.ml12 { margin-left: 12px; }
.ml13 { margin-left: 13px; }
.ml16 { margin-left: 16px; }
.ml81 { margin-left: 81px; }
.dollar {
  font: bold 12px "Liberation Sans", sans-serif;
  fill: #6a4a00;
  text-anchor: middle;
}
.tool-t {
  font: bold 12px "Liberation Serif", serif;
  fill: #333;
  text-anchor: middle;
}
.lvl {
  font: 8.500px "Liberation Sans", sans-serif;
  fill: #1fa83f;
  text-anchor: middle;
}
.lvl-bar {
  width: 42px;
  height: 13px;
  box-sizing: border-box;
  border: 1px solid #8e8e8e;
  background: #fff;
  flex: none;
}
.lvl-fill {
  display: block;
  width: 21px;
  height: 100%;
  background: #45d845;
}

.frames {
  height: 30px;
  flex: none;
  display: flex;
  align-items: center;
}
.frame-list {
  display: flex;
  align-items: center;
  margin-left: 1px;
  width: 290px;
  height: 30px;
  border-right: 1px solid #a8a8a8;
  box-sizing: border-box;
}
.frame {
  width: 32px;
  height: 26px;
  flex: none;
  box-sizing: border-box;
  display: flex;
  align-items: center;
  justify-content: center;
  font-size: 10.500px;
  color: #555;
  font-family: "Liberation Sans", sans-serif;
}
.frame.on {
  background: #bcdcf5;
  border: 1px solid #9bc8ea;
  width: 30px;
  margin: 0 1px;
}

.chart-wrap {
  height: 580px;
  flex: none;
}
.chart { display: block; }
.h-long { stroke: #38a838; stroke-dasharray: 17 6 4 6; }
.h-short { stroke: #40b040; stroke-dasharray: 4 3; }
.h-red { stroke: #c8171c; stroke-dasharray: 17 6 4 6; }
.period { stroke: #fff; stroke-dasharray: 3 3; }
.lbl {
  font: 10px "Liberation Sans", sans-serif;
  fill: #fff;
  letter-spacing: -0.150px;
  white-space: pre;
}
.axis { letter-spacing: -0.450px; }
.price-now { fill: #222; }
.dash-blue { fill: none; stroke: #20508c; stroke-width: 0.800; stroke-dasharray: 3 3; }
.dash-red { fill: none; stroke: #c8492e; stroke-width: 0.800; stroke-dasharray: 3 2; }
.green { fill: none; stroke: #3cd03c; stroke-width: 1; }
.arrow-up { fill: #0e5fa8; stroke: #fff; stroke-width: 0.900; }
.arrow-down { fill: #e0482a; stroke: #fff; stroke-width: 0.900; }

.tabs {
  height: 20px;
  flex: none;
  display: flex;
  align-items: flex-start;
  border-bottom: 1px solid #fff;
  box-sizing: border-box;
  font-size: 11.300px;
}
.tab {
  height: 20px;
  line-height: 18px;
  color: #808080;
  padding: 0 12px;
  margin-left: -1px;
}
.tab.active {
  width: 117px;
  box-sizing: border-box;
  margin-left: 3px;
  background: #fff;
  color: #111;
  border: 1px solid #222;
  border-top: none;
}
.tab-arrows {
  margin-left: auto;
  margin-right: 11px;
  margin-top: 4px;
  display: flex;
  gap: 14px;
}

.statusbar {
  height: 23px;
  flex: none;
  display: flex;
  align-items: center;
  font-size: 11.200px;
  color: #222;
}
.st-help { width: 671px; padding-left: 2px; flex: none; }
.st-cell {
  height: 19px;
  line-height: 19px;
  margin-top: 2px;
  border-left: 1px solid #a8a8a8;
  box-sizing: border-box;
  flex: none;
  padding-left: 4px;
}
.c-xm { width: 128px; }
.c2 { width: 98px; }
.c3 { width: 71px; }
.c4 { width: 71px; }
.c5 { width: 68px; }
.c6 { width: 70px; }
.c7 { width: 66px; }
.c-ping { display: flex; align-items: center; gap: 5px; padding-left: 5px; width: 120px; }

.taskbar {
  height: 40px;
  flex: none;
  display: flex;
  align-items: center;
  background: #1f3745;
  color: #fff;
}
.tk-start {
  width: 49px;
  height: 40px;
  display: flex;
  align-items: center;
  justify-content: center;
  padding-right: 2px;
  box-sizing: border-box;
}
.tk-search {
  width: 342px;
  height: 40px;
  box-sizing: border-box;
  background: #f2f2f2;
  display: flex;
  align-items: center;
  padding-left: 13px;
  gap: 10px;
  color: #333;
  font-size: 13.800px;
  flex: none;
}
.tk-app {
  width: 48.600px;
  height: 40px;
  display: flex;
  align-items: center;
  justify-content: center;
  flex: none;
  box-sizing: border-box;
}
.tk-app.on {
  background: #4a5e6b;
  border-bottom: 2px solid #76b9ed;
  padding-top: 2px;
}
.w-task { width: 49px; margin-right: 3px; }
.xm-big {
  width: 24px;
  height: 24px;
  border-radius: 4px;
  background: #141414;
  color: #fff;
  font: italic bold 12px/24px "Liberation Sans", sans-serif;
  text-align: center;
}
.three {
  font: bold 18px "Liberation Sans", sans-serif;
  fill: #fff;
  text-anchor: middle;
}
.pdf {
  font: 5px "Liberation Sans", sans-serif;
  fill: #fff;
  text-anchor: middle;
}
.tray {
  margin-left: auto;
  height: 40px;
  display: flex;
  align-items: center;
  color: #fff;
}
.t2 { margin-left: 11px; }
.t3 { margin-left: 8px; }
.t4 { margin-left: 11px; }
.t5 { margin-left: 8px; }
.t-lang { margin-left: 14px; width: 20px; font-size: 11px; white-space: nowrap; }
.t-clock {
  margin-left: 10px;
  width: 62px;
  display: flex;
  flex-direction: column;
  align-items: center;
  gap: 2px;
  font-size: 11px;
  letter-spacing: -0.200px;
  line-height: 16px;
  white-space: nowrap;
}
.t-note { margin-left: 15px; margin-right: 21px; }
.t-end {
  width: 1px;
  height: 40px;
  background: #3a4f5c;
  margin-right: 3px;
}
</style>
<style>
html, body { margin: 0; padding: 0; background: #f0f0f0; }
</style>
